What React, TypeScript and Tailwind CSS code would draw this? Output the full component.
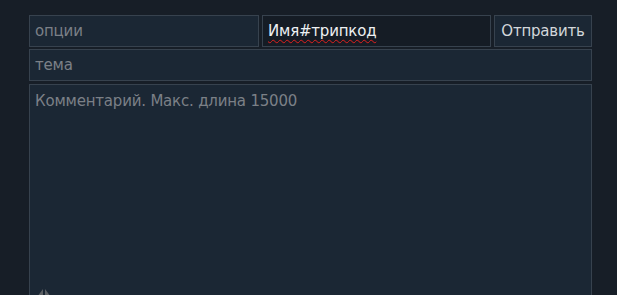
export default function App() {
    const field =
        "h-8 border border-[#37424e] bg-[#1b2734] px-[5px] text-[#c9ced3] placeholder:text-[#7b8087] outline-none";

    return (
        <div className="h-[295px] overflow-hidden bg-[#171e27] pt-[15px] pl-[29px] pr-[26px] font-['DejaVu_Sans',sans-serif] text-[15px] tracking-[-0.2px]">
            <form className="flex w-[563px] flex-col">
                <div className="flex gap-[3px]">
                    <input placeholder="опции" className={`${field} w-[230px]`} />
                    {/* name field, with the spellcheck squiggle */}
                    <div className="flex h-8 w-[229px] items-center border border-[#37424e] bg-[#151c25] px-[5px] text-[#eef0f2]">
                        <span className="underline decoration-wavy decoration-[#e0201e] decoration-1 underline-offset-[3px]">
                            Имя#трипкод
                        </span>
                    </div>
                    <button
                        type="button"
                        className="h-8 w-[98px] border border-[#37424e] bg-[#1b2734] text-[#d3d7db]"
                    >
                        Отправить
                    </button>
                </div>
                <input placeholder="тема" className={`${field} mt-[2px] w-full`} />
                <div className="relative mt-[3px]">
                    <textarea
                        placeholder="Комментарий. Макс. длина 15000"
                        className="block h-[230px] w-full resize-none border border-[#37424e] bg-[#1b2734] px-[5px] py-[5px] text-[#c9ced3] placeholder:text-[#7b8087] outline-none"
                    />
                    {/* drag handle peeking at the bottom */}
                    <svg
                        className="absolute left-[7px] top-[203px]"
                        width="16"
                        height="10"
                        viewBox="0 0 16 10"
                    >
                        <path d="M1 10 L7 2 L7 10 Z" fill="#5b5f63" />
                        <path d="M9 10 L9 2 L15 10 Z" fill="#5b5f63" />
                    </svg>
                </div>
            </form>
        </div>
    );
}
